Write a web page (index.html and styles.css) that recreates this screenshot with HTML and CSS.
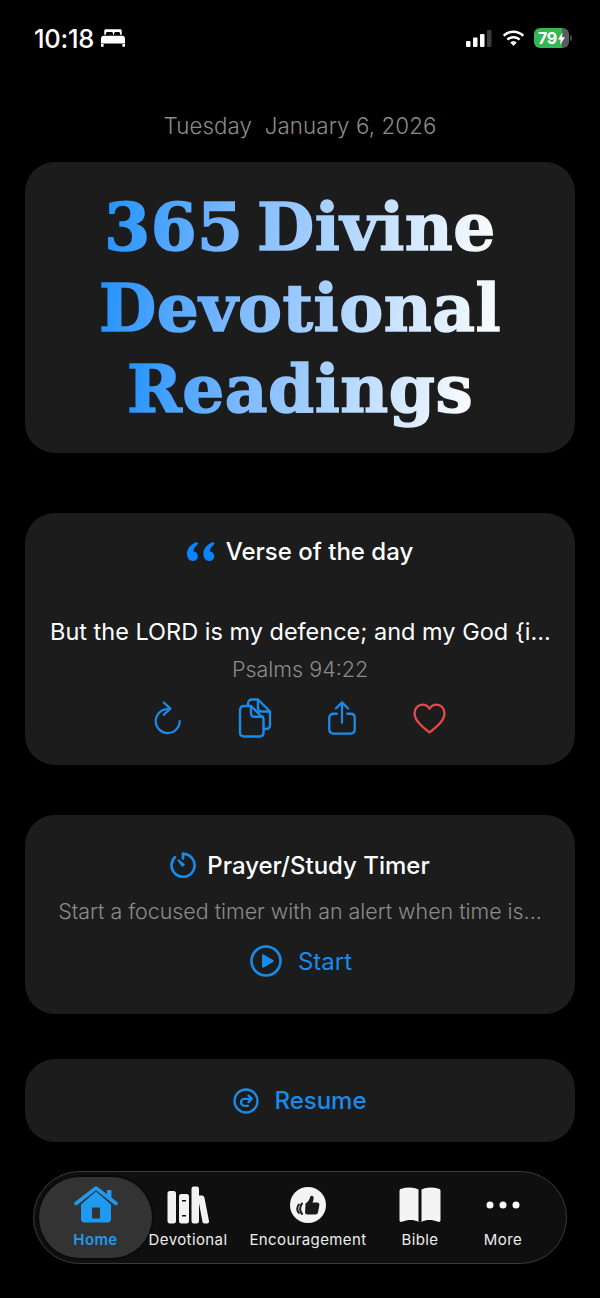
FILE: index.html
```html
<!DOCTYPE html>
<html lang="en">
<head>
  <meta charset="UTF-8" />
  <meta name="viewport" content="width=device-width, initial-scale=1.0"/>
  <title>365 Divine Devotional Readings</title>
  <link rel="stylesheet" href="styles.css">
</head>
<body>

  <div class="status">
    <div class="status-left">
      <span class="time">10:18</span>
      <svg class="bed" viewBox="0 0 22 16"><path fill="#fff" d="M3 1.500C3 .6 3.600 0 4.500 0h13C18.400 0 19 .6 19 1.500V5h-1.500V4c0-.8-.6-1.400-1.400-1.400h-2.700c-.8 0-1.400.6-1.400 1.400v1h-1V4c0-.8-.6-1.400-1.400-1.400H5.900C5.100 2.600 4.500 3.200 4.500 4v1H3zM2.500 6h17C20.900 6 22 7.100 22 8.500V13H0V8.500C0 7.100 1.100 6 2.500 6zM0 13.500h2.400V16H0zM19.600 13.500H22V16h-2.400z"/></svg>
    </div>
    <div class="status-right">
      <svg class="signal" viewBox="0 0 26 17">
        <rect x="0" y="11" width="4.500" height="6" rx="1" fill="#fff"/>
        <rect x="7" y="7.500" width="4.500" height="9.500" rx="1" fill="#fff"/>
        <rect x="14" y="4" width="4.500" height="13" rx="1" fill="#fff"/>
        <rect x="21" y="0" width="4.500" height="17" rx="1" fill="#3c3c3c"/>
      </svg>
      <svg class="wifi" viewBox="0 0 24 18"><path fill="#fff" d="M12 3.800c3.300 0 6.300 1.300 8.500 3.400l1.700-1.800C19.500 2.800 15.900 1.200 12 1.200S4.500 2.800 1.800 5.400l1.700 1.800C5.700 5.100 8.700 3.800 12 3.800zM12 9c1.900 0 3.700.7 5 2l1.800-1.800C17 7.500 14.600 6.500 12 6.500S7 7.500 5.200 9.200L7 11c1.300-1.300 3.100-2 5-2zM12 11.700c-1.200 0-2.300.5-3.100 1.200L12 16.200l3.100-3.300c-.8-.7-1.900-1.200-3.100-1.200z"/></svg>
      <div class="battery">
        <div class="battery-fill">
          <span class="battery-num">79</span>
          <svg class="bolt" viewBox="0 0 8 14"><path fill="#fff" d="M5 0 0 8h3L2.500 14 8 5.500H4.700z"/></svg>
        </div>
        <i class="battery-cap"></i>
      </div>
    </div>
  </div>

  <main class="page">
    <div class="date">Tuesday  January 6, 2026</div>

    <section class="card title-card">
      <h1>
        <span>365 Divine</span>
        <span>Devotional</span>
        <span>Readings</span>
      </h1>
    </section>

    <section class="card verse-card">
      <h2 class="card-head">
        <svg class="quote" viewBox="0 0 28 19"><path fill="#0a84ff" d="M9.800 0C4.500 1.800 0 5.800 0 11.800 0 15.900 2.200 19 5.800 19c2.900 0 5-2.100 5-4.800 0-2.600-1.900-4.500-4.400-4.600C6.700 6.500 8.600 3.800 11.400 1.800zM26.200 0C20.900 1.800 16.400 5.800 16.400 11.800c0 4.100 2.200 7.200 5.800 7.200 2.900 0 5-2.100 5-4.800 0-2.600-1.900-4.500-4.400-4.600.3-3.100 2.200-5.800 5-7.800z"/></svg>
        Verse of the day
      </h2>
      <p class="verse-text">But the LORD is my defence; and my God {i...</p>
      <p class="verse-ref">Psalms 94:22</p>
      <div class="verse-actions">
        <svg class="act" viewBox="0 0 32 36" fill="none" stroke="#1a8be8" stroke-width="2.400" stroke-linecap="round" stroke-linejoin="round"><path d="M15.500 8.500A12.800 12.800 0 1 0 28.500 21.300"/><path d="M11.500 1.500 18.500 8 11.500 14.500"/></svg>
        <svg class="act-copy" viewBox="0 0 34 40" fill="none" stroke="#1a8be8" stroke-width="2.400" stroke-linecap="round" stroke-linejoin="round"><path d="M10 7V5.500C10 3 11.500 1.500 14 1.500H20L32 13.500V27C32 29.500 30.500 31 28 31H26"/><path d="M20 2V10C20 12.300 21.200 13.500 23.500 13.500H31.500"/><path d="M6 8H13L25.500 20.500V34.500C25.500 37 24 38.500 21.500 38.500H6C3.500 38.500 2 37 2 34.500V12C2 9.500 3.500 8 6 8Z"/><path d="M13 8.500V15C13 17.500 14.300 18.800 16.800 18.800H25"/></svg>
        <svg class="act" viewBox="0 0 30 36" fill="none" stroke="#1a8be8" stroke-width="2.400" stroke-linecap="round" stroke-linejoin="round"><path d="M15 23V2"/><path d="M8.500 8 15 1.500 21.500 8"/><path d="M9.500 13.500H6C3.200 13.500 1.500 15.200 1.500 18V30C1.500 32.800 3.200 34.500 6 34.500H24C26.800 34.500 28.500 32.800 28.500 30V18C28.500 15.200 26.800 13.500 24 13.500H20.500"/></svg>
        <svg class="act-heart" viewBox="0 0 32 30" fill="none" stroke="#e5484d" stroke-width="2.300" stroke-linejoin="round"><path d="M16 28.500C9 23 1.500 17 1.500 9.800 1.500 5.100 5 1.500 9.300 1.500 12.100 1.500 14.600 3 16 5.600 17.400 3 19.900 1.500 22.700 1.500 27 1.500 30.500 5.100 30.500 9.800 30.500 17 23 23 16 28.500Z"/></svg>
      </div>
    </section>

    <section class="card timer-card">
      <h2 class="card-head">
        <svg class="timer-icon" viewBox="0 0 26 26" fill="none" stroke="#1a8be8" stroke-width="2.700" stroke-linecap="round"><path d="M13 1.800A11.500 11.500 0 1 1 4.900 5.200"/><path d="M13 1.800V6.500"/><path fill="#1a8be8" stroke-width="1.500" d="M7.800 7.800 13.800 12.200A1.300 1.300 0 0 1 12.200 13.800Z"/></svg>
        Prayer/Study Timer
      </h2>
      <p class="timer-text">Start a focused timer with an alert when time is...</p>
      <div class="start">
        <svg class="play" viewBox="0 0 32 32"><circle cx="16" cy="16" r="14.500" fill="none" stroke="#1a8be8" stroke-width="2.600"/><path fill="#1a8be8" d="M12 10.500c0-.9.900-1.400 1.700-1l9.400 5.500c.8.500.8 1.600 0 2l-9.400 5.500c-.8.400-1.700-.1-1.700-1z"/></svg>
        Start
      </div>
    </section>

    <section class="card resume-card">
      <svg class="resume-icon" viewBox="0 0 26 26" fill="none" stroke="#1a8be8" stroke-width="2.300" stroke-linecap="round" stroke-linejoin="round"><circle cx="13" cy="13" r="11.500"/><path d="M18.500 10.800H11.500A3.500 3.500 0 0 0 11.500 17.800H15"/><path d="M15.500 7.500 18.800 10.800 15.500 14.100"/></svg>
      Resume
    </section>
  </main>

  <nav class="tabbar">
    <div class="tab tab-active">
      <svg class="tab-icon" viewBox="0 0 44 38"><path fill="#1e9bf0" d="M22 5.500 7 18.500V33c0 2.200 1.300 3.500 3.500 3.500h23c2.200 0 3.500-1.300 3.500-3.500V18.500zM18 21.500h8v11h-8z" fill-rule="evenodd"/><path fill="none" stroke="#1e9bf0" stroke-width="3.600" stroke-linecap="round" stroke-linejoin="round" d="M2 17.500 22 2 42 17.500"/><path fill="#1e9bf0" d="M33 4h4.500v9L33 9.500z"/></svg>
      <span>Home</span>
    </div>
    <div class="tab tab-devotional">
      <svg class="tab-icon" viewBox="0 0 44 38"><path fill="#f2f2f2" fill-rule="evenodd" d="M1.500 7.500C1.500 6 2.300 5 3.800 5h3.900C9.200 5 10 6 10 7.500V35c0 1.500-.8 2.500-2.300 2.500H3.800C2.300 37.500 1.500 36.500 1.500 35zM13 10.500C13 9 13.800 8 15.300 8h5.400C22.200 8 23 9 23 10.500V35c0 1.500-.8 2.500-2.300 2.500h-5.400C13.800 37.500 13 36.500 13 35zM16 14v1.500h4V14zM16 29v1.500h4V29zM25.500 3C25.500 1.500 26.300.5 27.800.5h3C32.300.5 33 1.500 33 3v6.500h3c1.500 0 2.200 1 2.500 2.500l4.500 23c.3 1.500-.5 2.500-2 2.500h-2c-1.500 0-2.300-.5-2.600-2L33 17v18c0 1.500-.8 2.500-2.300 2.500h-3C26.300 37.500 25.500 36.500 25.500 35z"/></svg>
      <span>Devotional</span>
    </div>
    <div class="tab tab-wide">
      <svg class="tab-icon" viewBox="0 0 44 38"><circle cx="22" cy="19" r="18" fill="#f4f4f4"/><path fill="#1a1a1a" d="M19.500 17.500c2.500-1.500 4-3.700 4.800-7 .3-1.200 3-1.300 3.300 1 .2 1.800-.5 3.800-1.200 5h4.500c2 0 2.800 1.300 2.400 3l-1.200 6.500c-.3 1.700-1.300 2.500-3 2.500h-6.500c-1.600 0-2.600-.5-3.600-1.300z"/><path fill="none" stroke="#1a1a1a" stroke-width="2" stroke-linecap="round" d="M16 17.500c-2.500 2.800-2.500 7.500 0 10.500M12.800 18.500c-1.800 2.500-1.800 6 0 8.500"/></svg>
      <span>Encouragement</span>
    </div>
    <div class="tab tab-bible">
      <svg class="tab-icon" viewBox="0 0 44 38"><path fill="#f4f4f4" d="M1.500 5C1.500 3.800 2.200 3 3.300 2.700 9.500.8 16.500 1.200 20.500 3.500V36C16 33.500 9.500 33.500 4 35.800 2.700 36.300 1.500 35.500 1.500 34zM42.500 5C42.500 3.800 41.800 3 40.700 2.700 34.500.8 27.500 1.200 23.500 3.500V36C28 33.500 34.500 33.500 40 35.800 41.300 36.300 42.500 35.500 42.500 34z"/></svg>
      <span>Bible</span>
    </div>
    <div class="tab tab-more">
      <svg class="tab-icon" viewBox="0 0 44 38"><circle cx="9" cy="19" r="3.500" fill="#fff"/><circle cx="22" cy="19" r="3.500" fill="#fff"/><circle cx="35" cy="19" r="3.500" fill="#fff"/></svg>
      <span>More</span>
    </div>
  </nav>

</body>
</html>
```

FILE: styles.css
```css
* {
  box-sizing: border-box;
}

body {
  margin: 0;
  width: 600px;
  height: 1298px;
  overflow: hidden;
  font-family: Inter, "Noto Sans", sans-serif;
  background: #000;
  color: #fff;
}

/* status bar */
.status {
  display: flex;
  justify-content: space-between;
  align-items: center;
  height: 34px;
  margin-top: 21px;
  padding: 0 28px 0 34px;
}

.status-left {
  display: flex;
  align-items: center;
  gap: 7px;
}

.time {
  font-size: 25.500px;
  font-weight: 500;
  letter-spacing: -0.3px;
}

.bed {
  width: 24px;
  height: 18px;
}

.status-right {
  display: flex;
  align-items: center;
}

.signal {
  width: 26px;
  height: 17px;
  margin-right: 9px;
}

.wifi {
  width: 25px;
  height: 19px;
  margin-right: 8px;
}

.battery {
  display: flex;
  align-items: center;
  gap: 1px;
}

.battery-fill {
  display: flex;
  align-items: center;
  justify-content: center;
  gap: 1px;
  width: 35px;
  height: 20px;
  border-radius: 6px;
  background: linear-gradient(90deg, #34b755 79%, #5b5b5b 79%);
}

.battery-num {
  font-size: 16px;
  font-weight: 700;
  letter-spacing: -0.2px;
}

.bolt {
  width: 7px;
  height: 13px;
}

.battery-cap {
  width: 2px;
  height: 6px;
  border-radius: 0 2px 2px 0;
  background: #444;
}

/* main column */
.page {
  padding: 0 25px;
}

.date {
  margin-top: 52px;
  height: 55px;
  line-height: 37px;
  text-align: center;
  font-size: 22.300px;
  font-weight: 300;
  letter-spacing: 0.1px;
  color: #8b8b8b;
  white-space: pre;
}

.card {
  background: #1c1c1c;
  border-radius: 30px;
}

.title-card {
  height: 291px;
  padding-top: 25px;
}

h1 {
  display: flex;
  flex-direction: column;
  align-items: center;
  margin: 0;
  font-family: "DejaVu Serif", serif;
  font-size: 66px;
  font-weight: 700;
  line-height: 81px;
  letter-spacing: 0.500px;
  word-spacing: -10px;
}

/* each line runs its own blue to white fade, the stroke only thickens the clip */
h1 span {
  padding: 0 3px;
  background: linear-gradient(100deg, #1e90ff 0%, #7dbaff 35%, #c4e0ff 70%, #fff 100%);
  -webkit-background-clip: text;
  background-clip: text;
  color: transparent;
  -webkit-text-stroke: 1.600px transparent;
}

.verse-card {
  height: 252px;
  margin-top: 60px;
  padding: 20px 25px 0;
  text-align: center;
}

.card-head {
  display: flex;
  justify-content: center;
  align-items: center;
  gap: 11px;
  margin: 0;
  height: 36px;
  font-size: 24px;
  font-weight: 500;
}

.quote {
  width: 28px;
  height: 19px;
}

.verse-text {
  margin: 46px 0 0;
  font-size: 23.500px;
  line-height: 34px;
  white-space: nowrap;
}

.verse-ref {
  margin: 6px 0 0;
  font-size: 21.500px;
  font-weight: 300;
  line-height: 28px;
  color: #8b8b8b;
}

.verse-actions {
  display: grid;
  grid-template-columns: repeat(4, 87px);
  justify-content: center;
  justify-items: center;
  align-items: center;
  height: 40px;
  margin-top: 15px;
  padding-right: 3px;
}

.act {
  width: 30px;
  height: 34px;
}

.act-copy {
  width: 34px;
  height: 40px;
}

.act-heart {
  width: 33px;
  height: 31px;
}

.timer-card {
  height: 199px;
  margin-top: 50px;
  padding: 32px 30px 0;
  text-align: center;
}

.timer-icon {
  width: 26px;
  height: 26px;
}

.timer-text {
  margin: 13px -10px 0;
  font-size: 21.400px;
  font-weight: 300;
  line-height: 30px;
  color: #8b8b8b;
  white-space: nowrap;
}

.start {
  display: flex;
  justify-content: center;
  align-items: center;
  gap: 16px;
  margin-top: 19px;
  padding-left: 2px;
  font-size: 24px;
  color: #1a8be8;
}

.play {
  width: 32px;
  height: 32px;
}

.resume-card {
  display: flex;
  justify-content: center;
  align-items: center;
  gap: 15px;
  height: 83px;
  margin-top: 45px;
  font-size: 24px;
  font-weight: 500;
  color: #1a8be8;
}

.resume-icon {
  width: 26px;
  height: 26px;
}

/* bottom tab bar */
.tabbar {
  display: flex;
  align-items: center;
  width: 534px;
  height: 93px;
  margin: 29px 0 0 33px;
  padding: 0 5px;
  border: 1px solid #3a3a3a;
  border-radius: 47px;
  background: #0f0f0f;
}

.tab {
  flex: none;
  display: flex;
  flex-direction: column;
  align-items: center;
  justify-content: center;
  gap: 6px;
  height: 81px;
  font-size: 15px;
  letter-spacing: 0.4px;
  white-space: nowrap;
  color: #eee;
}

.tab-icon {
  width: 44px;
  height: 38px;
}

.tab-active {
  width: 113px;
  border-radius: 41px;
  background: #333;
  box-shadow: 0 0 0 2px #0a0a0a;
  font-weight: 600;
  color: #1e9bf0;
}

.tab-devotional {
  width: 72px;
}

.tab-wide {
  width: 168px;
}

.tab-bible {
  width: 56px;
}

.tab-more {
  width: 110px;
}
```
